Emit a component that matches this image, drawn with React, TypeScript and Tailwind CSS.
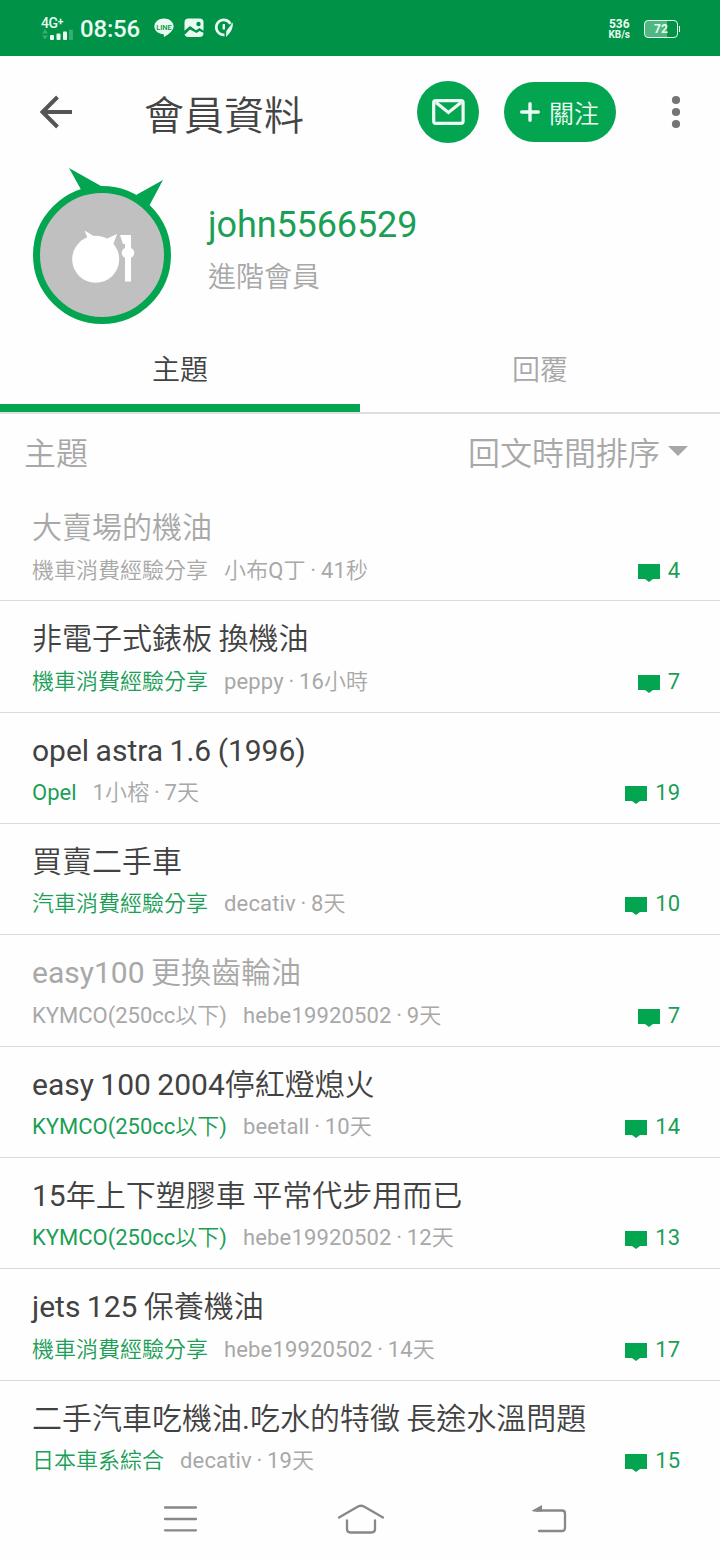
interface Topic {
  title: string;
  board: string;
  author: string;
  age: string;
  replies: number;
  read?: boolean;
}

const topics: Topic[] = [
  { title: '大賣場的機油', board: '機車消費經驗分享', author: '小布Q丁', age: '41秒', replies: 4, read: true },
  { title: '非電子式錶板 換機油', board: '機車消費經驗分享', author: 'peppy', age: '16小時', replies: 7 },
  { title: 'opel astra 1.6 (1996)', board: 'Opel', author: '1小榕', age: '7天', replies: 19 },
  { title: '買賣二手車', board: '汽車消費經驗分享', author: 'decativ', age: '8天', replies: 10 },
  { title: 'easy100 更換齒輪油', board: 'KYMCO(250cc以下)', author: 'hebe19920502', age: '9天', replies: 7, read: true },
  { title: 'easy 100 2004停紅燈熄火', board: 'KYMCO(250cc以下)', author: 'beetall', age: '10天', replies: 14 },
  { title: '15年上下塑膠車 平常代步用而已', board: 'KYMCO(250cc以下)', author: 'hebe19920502', age: '12天', replies: 13 },
  { title: 'jets 125 保養機油', board: '機車消費經驗分享', author: 'hebe19920502', age: '14天', replies: 17 },
  { title: '二手汽車吃機油.吃水的特徵 長途水溫問題', board: '日本車系綜合', author: 'decativ', age: '19天', replies: 15 },
];

function StatusBar() {
  return (
    <div className="flex h-14 items-center justify-between bg-[#009247] pl-[41px] pr-10 text-[#e9fbf1]">
      <div className="flex items-center">
        <div className="mt-0.5 flex h-[22px] w-8 flex-col justify-between">
          <span className="whitespace-nowrap text-[14px] font-medium leading-[10px] tracking-[-0.5px]">
            4G<sup className="top-[-3px] text-[11px] font-bold">+</sup>
          </span>
          <svg className="h-[11px] w-8" viewBox="0 0 32 11" fill="currentColor">
            <path d="M1 4.5 4 0l3 4.5zM1 6.5h6l-3 4z" opacity="0.25" />
            <rect x="9" y="6" width="4" height="5" rx="1" />
            <rect x="15.5" y="4.5" width="4" height="6.5" rx="1" />
            <rect x="22" y="2.5" width="4" height="8.5" rx="1" />
            <rect x="28" y="0.5" width="4" height="10.5" rx="1" opacity="0.25" />
          </svg>
        </div>
        <span className="ml-[7px] mt-0.5 text-[24px] font-medium leading-6 tracking-[-0.2px]">08:56</span>
        <svg className="ml-[14px] h-5 w-5" viewBox="0 0 20 20">
          <path d="M10 .5c5.3 0 9.6 3.5 9.6 8 0 4.2-5.4 8.3-9.6 10.5-.5-1.1.2-2.2-.4-2.8C4.500 16 .4 12.800.4 8.500c0-4.500 4.300-8 9.600-8z" fill="currentColor" />
          <text x="10" y="11.5" textAnchor="middle" fontSize="8" fontWeight="500" textLength="15.5" lengthAdjust="spacingAndGlyphs" fill="#009247">LINE</text>
        </svg>
        <svg className="ml-[10px] h-5 w-5" viewBox="0 0 20 20">
          <rect x="0.5" y="0.5" width="19" height="18.5" rx="4" fill="currentColor" />
          <path d="M0 13 6 8l6 4.200L15.500 10l4.500 3v2l-4.500-2-3 2L6 11.500 1.500 16H0z" fill="#009247" />
          <circle cx="14.5" cy="6" r="2.2" fill="#009247" />
        </svg>
        <svg className="ml-[10px] h-5 w-5" viewBox="0 0 20 20" fill="none" stroke="currentColor">
          <path d="M10.5 16.8A7.500 7.500 0 1 1 16.500 6" strokeWidth="2.8" />
          <path d="M9.800 6v5.500" strokeWidth="2.4" />
          <path d="M18.800 4.500c.5 5.500-2 10-6.800 14.500l.3-6z" fill="currentColor" stroke="none" />
        </svg>
      </div>
      <div className="flex items-center">
        <div className="mr-[14px] mt-0.5 flex flex-col items-center font-bold">
          <span className="text-[12px] leading-[11px]">536</span>
          <span className="text-[10px] leading-[10px]">KB/s</span>
        </div>
        <div className="mt-0.5 flex h-[18px] w-[34px] items-center justify-center rounded-[4px] border-[1.5px] border-current bg-linear-to-r from-[#50b682] from-70% to-transparent to-70% text-[12px] font-bold leading-none">
          72
        </div>
        <div className="ml-px mt-0.5 h-1.5 w-px bg-current" />
      </div>
    </div>
  );
}

function AppBar() {
  return (
    <header className="flex h-28 items-center px-[39px]">
      <svg className="h-[34px] w-[34px]" viewBox="0 0 34 34" fill="none" stroke="#555" strokeWidth="4">
        <path d="M33 17H4M18.5 2 3.5 17l15 15" />
      </svg>
      <h1 className="ml-[71px] mt-2.5 text-[40px] leading-none text-[#444]">會員資料</h1>
      <button className="ml-[113px] flex h-[62px] w-[62px] items-center justify-center rounded-full bg-[#04a551]">
        <svg className="h-[26px] w-[33px]" viewBox="0 0 33 26" fill="none" stroke="#ecfbf3" strokeWidth="3.2">
          <rect x="1.7" y="1.7" width="29.4" height="22.6" rx="2" />
          <path d="m4 3.5 12.4 10L29 3.5" />
        </svg>
      </button>
      <button className="ml-[25px] flex h-[60px] w-28 items-center rounded-full bg-[#04a551] pl-4 text-[#ecfbf3]">
        <svg className="h-5 w-5" viewBox="0 0 20 20" stroke="currentColor" strokeWidth="3.4" strokeLinecap="round">
          <path d="M10 1.7v16.6M1.7 10h16.6" />
        </svg>
        <span className="ml-[9px] mt-1 text-[25px] leading-none">關注</span>
      </button>
      <svg className="ml-auto h-8 w-2.5" viewBox="0 0 10 32" fill="#757575" overflow="visible">
        <circle cx="5" cy="4" r="4.1" />
        <circle cx="5" cy="16" r="4.1" />
        <circle cx="5" cy="28" r="4.1" />
      </svg>
    </header>
  );
}

function Avatar() {
  return (
    <svg className="h-[160px] w-[140px] shrink-0" viewBox="32 166 140 160">
      <path d="M69 168l32 18-17 9zM163 180l-27 15 12 13z" fill="#04a551" />
      <circle cx="102" cy="255" r="65.5" fill="#c0c0c0" stroke="#04a551" strokeWidth="7" />
      <g fill="#fff">
        <circle cx="95.7" cy="259.3" r="23.5" />
        <path d="M84.5 230.500l10 6-6 4zM117 234l-4 11-7-6z" />
        <path d="M120 235h11v13a5.500 5.500 0 0 1 0 10V281.500h-6V258a5.500 5.500 0 0 1 0-10v-4h-2z" />
      </g>
    </svg>
  );
}

function TopicRow({ topic }: { topic: Topic }) {
  return (
    <li className="flex h-[111.33px] flex-col border-b border-[#dadada] pl-8 pr-10">
      <p className={`mt-[18px] whitespace-nowrap text-[30px] leading-10 [word-spacing:-1px] ${topic.read ? 'text-[#a8a8a8]' : 'text-[#424242]'}`}>
        {topic.title}
      </p>
      <div className="mt-[8.5px] flex items-center text-[22px] leading-7 text-[#a8a8a8]">
        <span className={topic.read ? '' : 'text-[#1b9f57]'}>{topic.board}</span>
        <span className="ml-4 tracking-[0.15px] [word-spacing:-1px]">
          {topic.author} · {topic.age}
        </span>
        <span className="ml-auto flex items-center text-[#1b9f57]">
          <svg className="mr-2 mt-1 h-[18px] w-[22px]" viewBox="0 0 22 18" fill="#04a551">
            <path d="M0 0h22v15h-7l-4 3-4-3H0z" />
          </svg>
          {topic.replies}
        </span>
      </div>
    </li>
  );
}

function NavBar() {
  return (
    <nav className="flex h-[78px] items-center justify-between pb-[5px] pl-[162px] pr-[152px]">
      <svg className="h-7 w-[37px]" viewBox="0 0 37 28" stroke="#888" strokeWidth="2.3" strokeLinecap="round">
        <path d="M3 2.5h31M3 14h31M3 25.3h31" />
      </svg>
      <svg className="mr-[10px] h-[30px] w-12" viewBox="0 0 48 30" fill="none" stroke="#888" strokeWidth="2.3" strokeLinecap="round">
        <path d="M2 13.5 21 2.5q3-1.500 6 0l19 11M10 16.500V25q0 3.500 3.500 3.500h21q3.500 0 3.500-3.500v-8.500" />
      </svg>
      <svg className="h-[30px] w-9" viewBox="0 0 36 30" fill="none" stroke="#888" strokeWidth="2.3" strokeLinecap="round">
        <path d="M4 6.5h26q3 0 3 3V24q0 3-3 3H7" />
        <path d="M0 6.5 10 1v6.500H1z" fill="#888" stroke="none" />
      </svg>
    </nav>
  );
}

export default function App() {
  return (
    <div className="flex h-[1560px] w-[720px] flex-col overflow-hidden bg-[#fefefe] font-[Roboto,'Noto_Sans_CJK_TC_DemiLight','Noto_Sans_CJK_TC',sans-serif]">
      <StatusBar />
      <AppBar />
      <section className="flex h-40 items-start pl-8">
        <div className="-mt-0.5 h-[160px]">
          <Avatar />
        </div>
        <div className="ml-9 mt-9">
          <p className="text-[36px] leading-[43px] tracking-[-0.1px] text-[#1b9f57]">john5566529</p>
          <p className="mt-[11px] text-[28px] leading-10 text-[#a8a8a8]">進階會員</p>
        </div>
      </section>
      <div className="grid h-[86px] shrink-0 grid-cols-2 border-b-2 border-[#dedede] text-center text-[28px]">
        <button className="h-[84px] border-b-8 border-[#04a551] pt-2.5 text-[#424242]">主題</button>
        <button className="h-[84px] border-b-8 border-transparent pt-2.5 text-[#a8a8a8]">回覆</button>
      </div>
      <div className="flex h-[76px] shrink-0 items-center justify-between pl-6 pr-8 pt-1 text-[32px] text-[#a8a8a8]">
        <span>主題</span>
        <span className="flex items-center">
          回文時間排序
          <svg className="mb-1.5 ml-2 h-2.5 w-5" viewBox="0 0 20 10" fill="#a8a8a8">
            <path d="M0 0h20L10 10z" />
          </svg>
        </span>
      </div>
      <ul className="h-[992px] shrink-0 overflow-hidden">
        {topics.map((topic) => (
          <TopicRow key={topic.title} topic={topic} />
        ))}
      </ul>
      <NavBar />
    </div>
  );
}
